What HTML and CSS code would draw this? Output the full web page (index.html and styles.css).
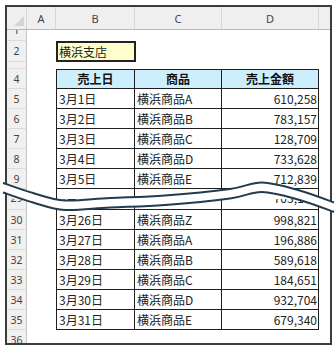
FILE: index.html
```html
<!DOCTYPE html>
<html lang="ja">
<head>
<meta charset="utf-8">
<title>横浜支店</title>
<link rel="stylesheet" href="styles.css">
</head>
<body>
<div class="frame">
  <div class="row colhead">
    <div class="corner"><span class="tri"></span></div>
    <div class="ch">A</div>
    <div class="ch">B</div>
    <div class="ch">C</div>
    <div class="ch">D</div>
    <div class="ch last"></div>
  </div>
  <div class="row r1"><div class="rh">1</div></div>
  <div class="row r2"><div class="rh">2</div><div></div><div class="branch">横浜支店</div></div>
  <div class="row r3"><div class="rh">3</div></div>
  <div class="row"><div class="rh">4</div><div></div><div class="th">売上日</div><div class="th">商品</div><div class="th">売上金額</div></div>
  <div class="row"><div class="rh">5</div><div></div><div class="td">3月1日</div><div class="td">横浜商品A</div><div class="td num">610,258</div></div>
  <div class="row"><div class="rh">6</div><div></div><div class="td">3月2日</div><div class="td">横浜商品B</div><div class="td num">783,157</div></div>
  <div class="row"><div class="rh">7</div><div></div><div class="td">3月3日</div><div class="td">横浜商品C</div><div class="td num">128,709</div></div>
  <div class="row"><div class="rh">8</div><div></div><div class="td">3月4日</div><div class="td">横浜商品D</div><div class="td num">733,628</div></div>
  <div class="row"><div class="rh">9</div><div></div><div class="td">3月5日</div><div class="td">横浜商品E</div><div class="td num">712,839</div></div>
  <div class="row r10"><div class="rh"></div><div></div><div class="td"></div><div class="td"></div><div class="td"></div></div>
  <div class="cut">
    <div class="row r29"><div class="rh">29</div><div></div><div class="td">3月25日</div><div class="td">横浜商品Y</div><div class="td num">703,146</div></div>
  </div>
  <div class="row"><div class="rh">30</div><div></div><div class="td">3月26日</div><div class="td">横浜商品Z</div><div class="td num">998,821</div></div>
  <div class="row"><div class="rh">31</div><div></div><div class="td">3月27日</div><div class="td">横浜商品A</div><div class="td num">196,886</div></div>
  <div class="row"><div class="rh">32</div><div></div><div class="td">3月28日</div><div class="td">横浜商品B</div><div class="td num">589,618</div></div>
  <div class="row"><div class="rh">33</div><div></div><div class="td">3月29日</div><div class="td">横浜商品C</div><div class="td num">184,651</div></div>
  <div class="row"><div class="rh">34</div><div></div><div class="td">3月30日</div><div class="td">横浜商品D</div><div class="td num">932,704</div></div>
  <div class="row"><div class="rh">35</div><div></div><div class="td">3月31日</div><div class="td">横浜商品E</div><div class="td num">679,340</div></div>
  <div class="row"><div class="rh">36</div></div>
</div>
<svg class="wave" width="335" height="348" viewBox="0 0 335 348" aria-hidden="true">
  <defs>
    <path id="wv" d="M3,183 C8,184.7 22.7,190.1 33,193 C43.3,195.9 52.2,199.7 65,200.5 C77.8,201.3 93.3,198.8 110,198 C126.7,197.2 145,197 165,195.5 C185,194 213.8,191.2 230,189 C246.2,186.8 250.7,182.3 262,182.5 C273.3,182.7 286.2,186.75 298,190 C309.8,193.25 327.2,200 334,202.5"/>
  </defs>
  <use href="#wv" fill="none" stroke="#ffffff" stroke-width="9.5" transform="translate(0,4.75)"/>
  <use href="#wv" fill="none" stroke="#213b4f" stroke-width="2"/>
  <use href="#wv" fill="none" stroke="#213b4f" stroke-width="2" transform="translate(0,9.5)"/>
</svg>
</body>
</html>
```

FILE: styles.css
```css
* {
  box-sizing: border-box;
}

body {
  margin: 0;
  padding: 5px;
  position: relative;
  background: #ffffff;
  font-family: "Noto Sans CJK JP", "Noto Sans", sans-serif;
  color: #222222;
}

.frame {
  width: 327px;
  height: 340px;
  border: 2px solid #3c3c3c;
  overflow: hidden;
  display: flex;
  flex-direction: column;
  background: #ffffff;
}

.row {
  display: grid;
  grid-template-columns: 20px 29px 79px 87px 97px 1fr;
  height: 20px;
  flex: none;
}

.colhead {
  height: 23px;
  background: #efefef;
  border-bottom: 1px solid #b8b8b8;
}

.corner {
  display: flex;
  align-items: flex-end;
  justify-content: flex-end;
  padding: 0 2px 3px 0;
  border-right: 1px solid #d6d6d6;
}

.tri {
  width: 10px;
  height: 10px;
  background: #d4d4d4;
  clip-path: polygon(100% 0, 100% 100%, 0 100%);
}

.ch {
  display: flex;
  align-items: center;
  justify-content: center;
  font-family: "Noto Sans", sans-serif;
  font-size: 11px;
  color: #444444;
  border-right: 1px solid #d6d6d6;
}

.ch.last {
  border-right: none;
}

.rh {
  display: flex;
  align-items: center;
  justify-content: center;
  overflow: hidden;
  background: #f0f0f0;
  border-right: 1px solid #c4c4c4;
  border-bottom: 1px solid #dadada;
  font-family: "Noto Sans", sans-serif;
  font-size: 10.5px;
  line-height: 20px;
  color: #444444;
}

.r1 {
  height: 11px;
}

.r2 {
  height: 21px;
}

.r3 {
  height: 7px;
}

.r1 .rh,
.r3 .rh {
  align-items: flex-end;
}

.branch {
  width: 80px;
  border: 2px solid #222222;
  background: #ffffcc;
  display: flex;
  align-items: center;
  padding-left: 1px;
  font-size: 12px;
  white-space: nowrap;
}

.td,
.th {
  display: flex;
  align-items: center;
  padding: 0 2px;
  font-size: 12px;
  line-height: 1;
  white-space: nowrap;
  overflow: hidden;
  border-right: 1px solid #1e1e1e;
  border-bottom: 1px solid #1e1e1e;
}

.row > .td:nth-child(3),
.row > .th:nth-child(3) {
  border-left: 1px solid #1e1e1e;
}

.th {
  justify-content: center;
  background: #cdeefc;
  font-weight: 700;
  color: #111111;
  border-top: 1px solid #1e1e1e;
}

.num {
  justify-content: flex-end;
  padding-right: 1px;
}

.r10 {
  height: 10px;
}

.r10 .td,
.r10 .rh {
  border-bottom: none;
}

.cut {
  height: 11px;
  flex: none;
  overflow: hidden;
  display: flex;
  flex-direction: column;
  justify-content: flex-end;
}

.r29 .td,
.r29 .rh {
  padding-bottom: 3px;
}

.wave {
  position: absolute;
  left: 0;
  top: 0;
  pointer-events: none;
}
```
